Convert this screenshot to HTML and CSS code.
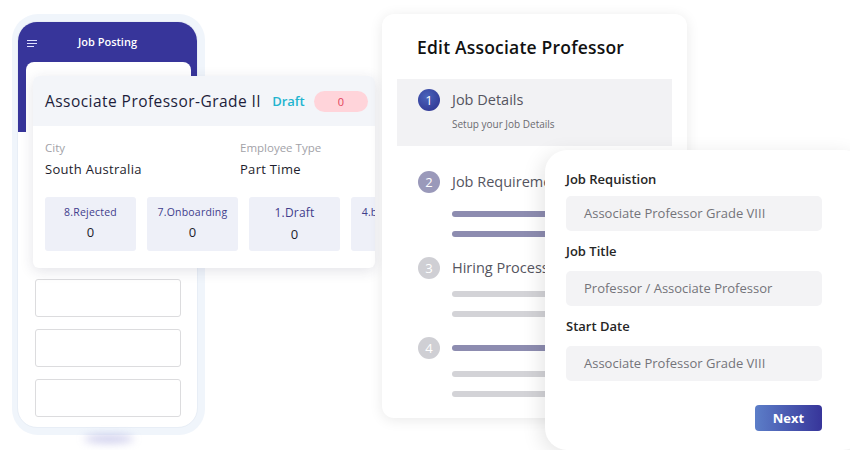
FILE: index.html
```html
<!DOCTYPE html>
<html>
  <head>
    <meta name="viewport" content="width=device-width, initial-scale=1">
    <link rel="stylesheet" href="styles.css">
  </head>
  <body>
    <div class="stage">

      <div class="phone">
        <div class="screen">
          <div class="screen-head">
            <span class="menu"><i></i><i></i><i></i></span>
            <span class="screen-title">Job Posting</span>
          </div>
          <div class="sheet">
            <div class="field-box"></div>
            <div class="field-box"></div>
            <div class="field-box"></div>
          </div>
        </div>
      </div>

      <div class="job-card">
        <div class="job-head">
          <span class="job-title">Associate Professor-Grade II</span>
          <span class="job-status">Draft</span>
          <span class="job-count">0</span>
        </div>
        <div class="job-body">
          <div class="job-info">
            <div>
              <div class="info-label">City</div>
              <div class="info-value">South Australia</div>
            </div>
            <div>
              <div class="info-label">Employee Type</div>
              <div class="info-value">Part Time</div>
            </div>
          </div>
          <div class="stats">
            <div class="stat"><span>8.Rejected</span><b>0</b></div>
            <div class="stat"><span>7.Onboarding</span><b>0</b></div>
            <div class="stat"><span class="big">1.Draft</span><b>0</b></div>
            <div class="stat"><span>4.background</span><b>0</b></div>
          </div>
        </div>
      </div>

      <div class="wizard">
        <h2>Edit Associate Professor</h2>
        <div class="step active">
          <span class="num n1">1</span>
          <div class="step-main">
            <div class="step-name">Job Details</div>
            <div class="step-sub">Setup your Job Details</div>
          </div>
        </div>
        <div class="step">
          <span class="num n2">2</span>
          <div class="step-main">
            <div class="step-name">Job Requirements</div>
            <div class="bar purple"></div>
            <div class="bar purple"></div>
          </div>
        </div>
        <div class="step">
          <span class="num n3">3</span>
          <div class="step-main">
            <div class="step-name">Hiring Process</div>
            <div class="bar grey"></div>
            <div class="bar grey"></div>
          </div>
        </div>
        <div class="step">
          <span class="num n3">4</span>
          <div class="step-main">
            <div class="step-name slim"><div class="bar purple"></div></div>
            <div class="bar grey"></div>
            <div class="bar grey"></div>
          </div>
        </div>
      </div>

      <div class="form-card">
        <label>Job Requistion</label>
        <div class="input">Associate Professor Grade VIII</div>
        <label>Job Title</label>
        <div class="input">Professor / Associate Professor</div>
        <label>Start Date</label>
        <div class="input">Associate Professor Grade VIII</div>
        <div class="actions"><button>Next</button></div>
      </div>

    </div>
  </body>
</html>
```

FILE: styles.css
```css
* { box-sizing: border-box; }
body {
  margin: 0;
  background: #fff;
  font-family: "Open Sans", "Noto Sans", sans-serif;
  color: #1c1c2e;
}
.stage {
  position: relative;
  width: 850px;
  height: 450px;
  overflow: hidden;
}

/* phone */
.phone {
  position: absolute;
  left: 12px;
  top: 14px;
  width: 193px;
  height: 421px;
  padding: 7px 7px 7px 5px;
  background: #f0f5fb;
  border-radius: 26px;
}
.phone::after {
  content: "";
  position: absolute;
  left: 72px;
  bottom: -8px;
  width: 50px;
  height: 8px;
  border-radius: 50%;
  background: rgba(110, 110, 200, .35);
  filter: blur(4px);
}
.screen {
  height: 100%;
  background: #fff;
  border-radius: 20px;
  overflow: hidden;
  border: 1px solid #e8eef6;
}
.screen-head {
  height: 110px;
  background: #37359a;
  display: flex;
  align-items: flex-start;
  padding: 12px 0 0 9px;
  position: relative;
}
.menu {
  display: flex;
  flex-direction: column;
  gap: 2px;
  width: 10px;
  margin-top: 6px;
}
.menu i {
  display: block;
  height: 1px;
  background: #dfe0ff;
}
.menu i:last-child { width: 7px; }
.screen-title {
  flex: 1;
  text-align: center;
  color: #fff;
  font-size: 11px;
  font-weight: 600;
  padding-right: 19px;
}
.sheet {
  margin: -70px 6px 0 8px;
  background: #fff;
  border-radius: 8px 8px 0 0;
  padding: 217px 10px 0 9px;
  position: relative;
}
.field-box {
  height: 38px;
  border: 1px solid #dcdcde;
  border-radius: 3px;
  margin-bottom: 12px;
}

/* job card */
.job-card {
  position: absolute;
  left: 33px;
  top: 76px;
  width: 342px;
  height: 192px;
  background: #fff;
  border-radius: 6px;
  overflow: hidden;
  box-shadow: 0 3px 14px rgba(40, 40, 80, .13);
}
.job-head {
  height: 50px;
  background: #f3f5f9;
  display: flex;
  align-items: center;
  padding: 0 7px 0 12px;
}
.job-title {
  font-size: 15.5px;
  letter-spacing: .45px;
  color: #1d1d3b;
}
.job-status {
  margin-left: 11px;
  color: #22b4cf;
  font-size: 13px;
  font-weight: 600;
}
.job-count {
  margin-left: auto;
  width: 54px;
  height: 21px;
  border-radius: 11px;
  background: #ffd4da;
  color: #e2425c;
  font-size: 11px;
  display: flex;
  align-items: center;
  justify-content: center;
}
.job-body { padding: 14px 0 0 12px; }
.job-info {
  display: grid;
  grid-template-columns: 195px 1fr;
}
.info-label {
  font-size: 11.5px;
  color: #a2a2a8;
  line-height: 15px;
}
.info-value {
  font-size: 13px;
  color: #1d1d2d;
  margin-top: 5px;
  letter-spacing: .3px;
  line-height: 18px;
}
.stats {
  display: flex;
  gap: 11px;
  margin-top: 19px;
}
.stat {
  flex: 0 0 91px;
  height: 54px;
  background: #eef0f8;
  border-radius: 3px;
  display: flex;
  flex-direction: column;
  align-items: center;
  justify-content: center;
  gap: 4px;
  padding-bottom: 2px;
}
.stat span {
  font-size: 10.5px;
  color: #3f3d8c;
  letter-spacing: .2px;
  white-space: nowrap;
}
.stat span.big { font-size: 12px; }
.stat b {
  font-weight: 400;
  font-size: 13px;
  color: #1d1d2d;
}

/* wizard */
.wizard {
  position: absolute;
  left: 382px;
  top: 14px;
  width: 305px;
  height: 404px;
  background: #fff;
  border-radius: 12px;
  box-shadow: 0 2px 14px rgba(0, 0, 0, .09);
  padding: 21px 15px 0 15px;
}
.wizard h2 {
  margin: 0 0 20px 20px;
  font-size: 17.5px;
  font-weight: 600;
  letter-spacing: .2px;
  color: #111;
  line-height: 24px;
}
.step {
  display: flex;
  align-items: flex-start;
  gap: 12px;
  padding-left: 21px;
  margin-bottom: 20px;
}
.step.active {
  background: #f2f2f4;
  height: 67px;
  padding-top: 10px;
  margin-bottom: 25px;
}
.num {
  flex: 0 0 22px;
  height: 22px;
  border-radius: 50%;
  color: #fff;
  font-size: 13px;
  display: flex;
  align-items: center;
  justify-content: center;
}
.n1 { background: radial-gradient(circle at 40% 35%, #4a63bb, #2c2f8c); }
.n2 { background: #9a99ba; }
.n3 { background: #cfcfd4; }
.step-main { flex: 1; }
.step-name {
  font-size: 14.5px;
  color: #55555f;
  line-height: 22px;
  height: 22px;
  white-space: nowrap;
}
.step-name.slim { padding-top: 8px; }
.step-sub {
  font-size: 10px;
  color: #6a6a70;
  margin-top: 6px;
}
.bar {
  height: 6px;
  border-radius: 3px;
}
.step-name + .bar { margin-top: 12px; }
.bar + .bar { margin-top: 14px; }
.step:nth-of-type(2) .step-name + .bar { margin-top: 18px; }
.purple { background: #8d8cb0; }
.grey { background: #d3d3d7; }

/* form card */
.form-card {
  position: absolute;
  left: 545px;
  top: 150px;
  width: 320px;
  height: 300px;
  background: #fff;
  border-radius: 22px;
  box-shadow: -4px 4px 20px rgba(0, 0, 0, .1);
  padding: 19px 0 0 21px;
}
.form-card label {
  display: block;
  font-size: 13px;
  font-weight: 600;
  color: #262626;
  line-height: 20px;
  margin-bottom: 10px;
}
.form-card label:first-child { margin-bottom: 7px; }
.input {
  width: 256px;
  height: 35px;
  background: #f3f3f5;
  border-radius: 5px;
  padding-left: 18px;
  font-size: 13px;
  color: #74747a;
  line-height: 35px;
  margin-bottom: 10px;
}
.actions {
  width: 256px;
  display: flex;
  justify-content: flex-end;
  padding-top: 14px;
}
.actions button {
  width: 67px;
  height: 26px;
  border: none;
  border-radius: 4px;
  background: linear-gradient(90deg, #5c7ec8, #37359a);
  color: #fff;
  font-family: inherit;
  font-size: 13px;
  font-weight: 700;
}
```
